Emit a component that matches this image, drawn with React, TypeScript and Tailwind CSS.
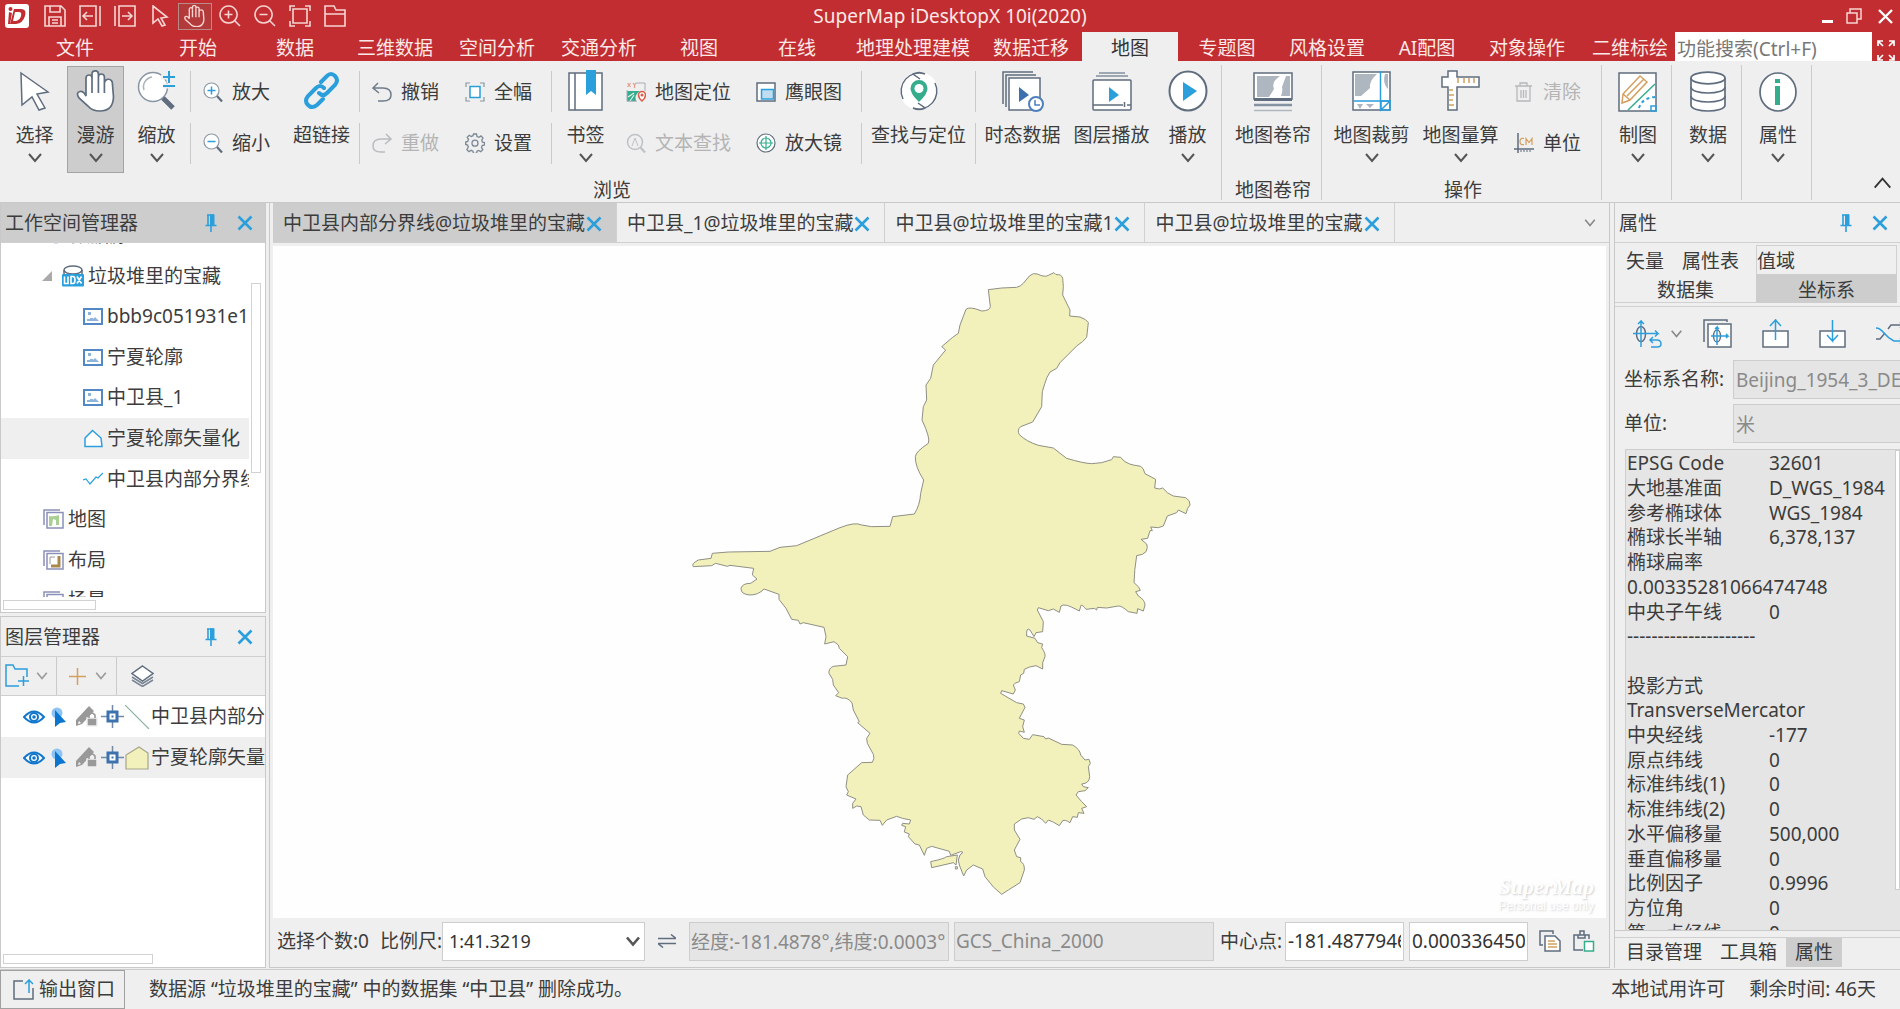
import React from 'react';

type Kids = { children?: React.ReactNode };

const SLATE = '#5f6d7e';
const BLUE = '#2b9fdc';
const GREEN = '#35ad8d';
const BROWN = '#d3a05f';

/* ---------- icons ---------- */

interface SvgProps extends Kids {
  w: number;
  h: number;
  box?: string;
  stroke?: string;
  sw?: number;
  className?: string;
}

function Svg({ w, h, box, stroke = SLATE, sw = 1.5, className = '', children }: SvgProps) {
  return (
    <svg
      width={w}
      height={h}
      viewBox={box ?? `0 0 ${w} ${h}`}
      fill="none"
      stroke={stroke}
      strokeWidth={sw}
      className={`shrink-0 ${className}`}
      aria-hidden="true"
    >
      {children}
    </svg>
  );
}

const HAND =
  'M10 26V8a3 3 0 0 1 6 0V4a3.2 3.2 0 0 1 6.4 0V7a3 3 0 0 1 6 0V13a3.4 3.4 0 0 1 8 0.5L37.500 27Q37 41 24 41Q16 41 12 36L3 28Q-0.500 22.500 4 21.500Q7.500 21 10 26Z';

function Chevron({ w = 14, h = 10, color = '#555', sw = 2 }: { w?: number; h?: number; color?: string; sw?: number }) {
  return (
    <Svg w={w} h={h} box="0 0 14 10" stroke={color} sw={sw}>
      <path d="M1 1l6 7 6-7" />
    </Svg>
  );
}

function CloseIcon() {
  return (
    <Svg w={16} h={16} stroke={BLUE} sw={2.6}>
      <path d="M1.500 1.500l13 13M14.500 1.500l-13 13" />
    </Svg>
  );
}

function PinIcon() {
  return (
    <Svg w={12} h={18} stroke={BLUE} sw={1.6}>
      <path d="M3 1v10M0.500 11.500h11M6 12v6M2 1h7" />
      <rect x="5" y="0.500" width="4.500" height="11" fill={BLUE} stroke="none" />
    </Svg>
  );
}

const icons = {
  select: (
    <Svg w={32} h={40}>
      <path d="M2 2L29 21 18 23 26 37 20 39 13 26 3 34Z" fill="#fff" />
    </Svg>
  ),
  pan: (
    <Svg w={40} h={42} sw={1.7}>
      <path d={HAND} fill="#fff" />
      <path d="M16 8v15M22.400 7v16M28.400 13v10" />
    </Svg>
  ),
  zoom: (
    <Svg w={40} h={42}>
      <circle cx="16" cy="17" r="14.500" fill="#fff" stroke="#8995a3" />
      <path d="M7 20A10 10 0 0 1 15 7" stroke="#a9b2bc" />
      <path d="M26 28l10 10" strokeWidth="5" />
      <path d="M24 7h14M32 1v12M26 16h12" stroke="#efefef" strokeWidth="5" />
      <path d="M26 7h12M32 1v12M26 16h12" stroke={BLUE} strokeWidth="2" />
    </Svg>
  ),
  link: (
    <Svg w={38} h={40} stroke={BLUE} sw={4}>
      <path d="M18 11l6-6q4-4 8 0 4 4 0 9l-8 8q-4 4-8 0" strokeLinecap="round" />
      <path d="M20 28l-6 6q-5 4-9 0-4-4 0-9l8-8q4-4 8 0" strokeLinecap="round" />
    </Svg>
  ),
  bookmark: (
    <Svg w={36} h={42}>
      <rect x="1" y="3" width="33" height="37" fill="#fff" />
      <path d="M7 3v37" />
      <path d="M18 0h10v25l-5-4-5 4z" fill={BLUE} stroke="none" />
    </Svg>
  ),
  findLocate: (
    <Svg w={40} h={42}>
      <circle cx="20" cy="21" r="19" fill="#fff" stroke="none" />
      <path d="M26 4A18 18 0 0 0 4 29M14 38A18 18 0 0 0 36 13M26 4q-6-3-12 0l7 5M14 38q6 3 12 0l-7-5" />
      <path d="M20 10a8.500 8.500 0 0 0-8.500 8.500Q11.500 24 20 32 28.500 24 28.500 18.500A8.500 8.500 0 0 0 20 10z" fill={GREEN} stroke="none" />
      <circle cx="20" cy="18.500" r="4.500" fill="#fff" stroke="none" />
    </Svg>
  ),
  timeData: (
    <Svg w={42} h={42}>
      <path d="M1 34V2h30M4 37V5h30" />
      <rect x="7" y="8" width="31" height="32" fill="#fff" />
      <path d="M17 17l10 8-10 7z" fill="#3c6fae" stroke="none" />
      <circle cx="34" cy="34" r="7" fill="#fff" stroke="#4d7fbd" strokeWidth="2" />
      <path d="M33 30v5h5" stroke="#4d7fbd" />
    </Svg>
  ),
  layerPlay: (
    <Svg w={40} h={42}>
      <path d="M7 3h26M4 6h32" stroke="#8491a0" />
      <rect x="1" y="10" width="38" height="30" rx="1" fill="#fff" />
      <path d="M1 35h30M35 35h4M32.500 32v5" />
      <path d="M17 17l10 8-10 7z" fill={BLUE} stroke="none" />
    </Svg>
  ),
  play: (
    <Svg w={40} h={42} sw={2}>
      <ellipse cx="20" cy="21" rx="18.500" ry="19.500" fill="#fff" />
      <path d="M15 12l14 9-14 10z" fill={BLUE} stroke="none" />
    </Svg>
  ),
  swipe: (
    <Svg w={40} h={42}>
      <rect x="1" y="3" width="38" height="26" fill="#fff" />
      <path d="M4 6h23q-9 6-6 13l-5 8H4zM33 6h4v20h-9q2-5 1-9z" fill="#aeb6c0" stroke="none" />
      <path d="M1 29.500h38" strokeWidth="3" />
      <path d="M1 35h38" strokeWidth="2.500" stroke="#8491a0" />
      <path d="M1 40.500h38" stroke="#aeb6c0" />
    </Svg>
  ),
  clip: (
    <Svg w={40} h={42}>
      <rect x="1" y="2" width="37" height="38" fill="#fff" />
      <path d="M3 4h22q-8 7-7 14l-9 8H3zM33 4h3v15q-6-6-3-15zM5 34h6l-3 5zM14 34h8l-4 4z" fill="#aeb6c0" stroke="none" />
      <path d="M28.500 1v40M1 31h38" stroke={BLUE} />
      <path d="M29 31h9v9h-9zM38 31l-10 10" stroke={BLUE} />
    </Svg>
  ),
  measure: (
    <Svg w={40} h={42}>
      <path d="M7 1h9v6h22v10H16v23H7V17H1V7h6z" fill="#fff" />
      <path d="M17 8v5M23 8v5M28 8v5M33 8v5" stroke={BROWN} />
      <path d="M8 20h4M8 25h5M8 30h4M8 35h5" stroke={BROWN} />
    </Svg>
  ),
  mapping: (
    <Svg w={40} h={42}>
      <rect x="1" y="3" width="37" height="38" fill="#fff" />
      <path d="M4 33l1-9L22 6l7 6L12 30zM5 24l7 6M9 26L26 9" stroke={BROWN} />
      <path d="M37 14L10 40" stroke={GREEN} />
      <path d="M21 38q3-10 16-11" stroke={BLUE} strokeDasharray="3 3" strokeWidth="2" />
      <rect x="33" y="36" width="5" height="5" stroke={BLUE} />
    </Svg>
  ),
  database: (
    <Svg w={38} h={42} sw={1.7}>
      <path d="M2 8v27c0 8 34 8 34 0V8" fill="#fff" />
      <ellipse cx="19" cy="8" rx="17" ry="5.800" fill="#fff" />
      <path d="M2 17c0 8 34 8 34 0M2 26c0 8 34 8 34 0" />
    </Svg>
  ),
  info: (
    <Svg w={40} h={42} sw={1.7}>
      <ellipse cx="20" cy="22" rx="18" ry="19" fill="#fff" />
      <path d="M19.500 9v4M19.500 16v19" stroke={GREEN} strokeWidth="5" />
    </Svg>
  ),
  zoomIn: (
    <Svg w={20} h={20} sw={1.2}>
      <circle cx="8.500" cy="8.500" r="7.500" fill="#fff" stroke="#8e99a6" />
      <path d="M14 14l5 5.500" strokeWidth="2.200" />
      <path d="M8.500 4.500v8M4.500 8.500h8" stroke={BLUE} strokeWidth="1.500" />
    </Svg>
  ),
  zoomOut: (
    <Svg w={20} h={20} sw={1.2}>
      <circle cx="8.500" cy="8.500" r="7.500" fill="#fff" stroke="#8e99a6" />
      <path d="M14 14l5 5.500" strokeWidth="2.200" />
      <path d="M4.500 8.500h8" stroke={BLUE} strokeWidth="1.500" />
    </Svg>
  ),
  undo: (
    <Svg w={20} h={20} stroke="#6f7c8b">
      <path d="M6 1L1 6l6 5M1 6h10q8 0 8 7 0 6-8 6H6" />
    </Svg>
  ),
  redo: (
    <Svg w={20} h={20} stroke="#b9bdc1">
      <path d="M14 1l5 5-6 5M19 6H9Q1 6 1 13q0 6 8 6h4" />
    </Svg>
  ),
  fullExtent: (
    <Svg w={20} h={20}>
      <path d="M1 5V1h4M15 1h4v4M19 15v4h-4M5 19H1v-4" stroke="#8b96a2" strokeWidth="1.200" />
      <rect x="5" y="4.500" width="10" height="11" fill="#fff" stroke={BLUE} />
    </Svg>
  ),
  settings: (
    <Svg w={20} h={20} stroke="#7c8896" sw={1.3}>
      <path d="M8.500 1h3l.5 2.500 2 .8 2-1.400 2 2.200-1.300 2 .8 2 2 .4v2.500l-2.300.6-.7 2 1.300 2-2 2-2.200-1.200-1.600.8-.5 2.300h-3l-.6-2.400-1.800-.8-2.200 1.300-2-2L3.300 14l-.7-2L.700 11.500V9l2-.5.8-2.200-1.300-2 2-2 2 1.200 1.800-.8z" />
      <circle cx="10" cy="10.200" r="3" />
    </Svg>
  ),
  mapLocate: (
    <Svg w={20} h={20}>
      <path d="M1 9h13q-6 4-4 10H1z" fill={GREEN} stroke="none" />
      <path d="M2 15l6-4M4 19l4-6" stroke="#dff2ec" strokeWidth="1.200" />
      <path d="M1 8v11.300h10M10 1h9v8" stroke="#a6aeb8" strokeWidth="1" />
      <path d="M1.500 1l3 4M4.500 1l-3 4M7 1l1.500 2L10 1M8.500 3v3" stroke="#e59a8a" strokeWidth="1.200" />
      <path d="M16 9.500a3.500 3.500 0 0 0-3.500 3.500q0 3 3.500 6 3.500-3 3.500-6A3.500 3.500 0 0 0 16 9.500z" fill="#fff" stroke="#dc5c4a" />
      <circle cx="16" cy="13" r="0.800" stroke="#dc5c4a" />
    </Svg>
  ),
  textFind: (
    <Svg w={20} h={20} stroke="#bfc2c5">
      <circle cx="9" cy="9" r="7.500" />
      <path d="M14.500 14.500l4.500 5" strokeWidth="2.200" />
      <path d="M6 13l3-8 3 8" strokeWidth="1" />
    </Svg>
  ),
  eagleEye: (
    <Svg w={20} h={20}>
      <rect x="1" y="1" width="18" height="18" fill="#fff" />
      <rect x="5.500" y="7.500" width="12" height="9.500" fill="#bfdcf0" stroke={BLUE} />
    </Svg>
  ),
  magnifier: (
    <Svg w={20} h={20} sw={1.2}>
      <circle cx="10" cy="10" r="9" fill="#fff" />
      <circle cx="10" cy="10" r="5" stroke={GREEN} />
      <path d="M10 3v14M3 10h14" stroke={GREEN} />
    </Svg>
  ),
  trash: (
    <Svg w={20} h={20} stroke="#b5b8bb" sw={1.3}>
      <path d="M1 4h17M6 4V1h7v3M3 4v15h13V4M7 8v8M9.500 8v8M12 8v8" />
    </Svg>
  ),
  unit: (
    <Svg w={20} h={20}>
      <path d="M4 0v20M0 16h20" />
      <path d="M7 17v2M10 17v2M13 17v2M16 17v2" strokeWidth="1" />
      <path d="M10 5.500Q6 4.500 6 8.500T10 11.500M12 12V5.500l3 4 3-4V12" stroke={BROWN} strokeWidth="1.200" />
    </Svg>
  ),
};

type IconName = keyof typeof icons;

/* ---------- title bar ---------- */

const quickIcons: { label: string; art: React.ReactNode; active?: boolean }[] = [
  { label: '保存', art: <path d="M1 1h16l4 4v16H1zM6 1v6h10V1M5 21v-9h12v9M8 15h6M8 18h6" /> },
  { label: '上一视图', art: <path d="M17 1H1v20h16zM21 1v20M14 11H4M8 7l-4 4 4 4" /> },
  { label: '下一视图', art: <path d="M5 1h16v20H5zM1 1v20M8 11h10M14 7l4 4-4 4" /> },
  { label: '选择', art: <path d="M4 1l14 11-6 1 4 7-3 1-4-7-5 4z" /> },
  {
    label: '漫游',
    active: true,
    art: (
      <g transform="scale(.53)" strokeWidth="2.600">
        <path d={HAND} />
        <path d="M16 8v15M22.400 7v16M28.400 13v10" />
      </g>
    ),
  },
  { label: '放大', art: <path d="M9.500 1a8.500 8.500 0 1 0 .1 0zM16 16l5 5M9.500 5.500v8M5.500 9.500h8" /> },
  { label: '缩小', art: <path d="M9.500 1a8.500 8.500 0 1 0 .1 0zM16 16l5 5M5.500 9.500h8" /> },
  { label: '全幅', art: <path d="M4 4h14v14H4zM1 6V1h5M16 1h5v5M21 16v5h-5M6 21H1v-5" /> },
  { label: '打开', art: <path d="M1 21V1h9l2 4h9v16zM1 9h20" /> },
];

function TitleBar() {
  return (
    <header className="grid h-8 grid-cols-[1fr_auto_1fr] items-center bg-[#c22d31] text-[#fbe9e7]">
      <div className="flex items-center pl-[5px]">
        <svg width="24" height="24" viewBox="0 0 24 24" className="mr-[9px]" aria-hidden="true">
          <rect width="24" height="24" rx="3" fill="#fff" />
          <path d="M9 5h7q6 0 4 7t-9 8H5zM10 8L8 17h3q4-1 5-5t-2-4z" fill="#c22d31" fillRule="evenodd" />
          <circle cx="5.500" cy="5" r="2" fill="#c22d31" />
          <path d="M4 8l3 1-2 11H3z" fill="#c22d31" />
        </svg>
        <div className="flex gap-px">
          {quickIcons.map((q) => (
            <button
              key={q.label}
              aria-label={q.label}
              className={`flex h-[27px] w-[34px] items-center justify-center border ${q.active ? 'border-[#b98a86] bg-[#b23a3b]' : 'border-transparent'}`}
            >
              <Svg w={22} h={22} stroke="#f6d5d2" sw={1.6}>
                {q.art}
              </Svg>
            </button>
          ))}
        </div>
      </div>
      <h1 className="leading-6">SuperMap iDesktopX 10i(2020)</h1>
      <div className="flex items-center justify-end gap-3 pr-[7px]">
        <button aria-label="最小化">
          <Svg w={12} h={16} stroke="#fff" sw={3}>
            <path d="M0 13.500h11" />
          </Svg>
        </button>
        <button aria-label="还原">
          <Svg w={16} h={16} stroke="#f6d5d2">
            <path d="M1 5h10v10H1zM4 5V1h11v10h-4" />
          </Svg>
        </button>
        <button aria-label="关闭" className="ml-1">
          <Svg w={15} h={15} stroke="#fff" sw={2.4}>
            <path d="M1 1l13 13M14 1L1 14" />
          </Svg>
        </button>
      </div>
    </header>
  );
}

const menuTabs = [
  { name: '文件', width: 'w-[150px]' },
  { name: '开始', width: 'w-[96px]' },
  { name: '数据', width: 'w-[98px]' },
  { name: '三维数据', width: 'w-[102px]' },
  { name: '空间分析', width: 'w-[102px]' },
  { name: '交通分析', width: 'w-[102px]' },
  { name: '视图', width: 'w-[98px]' },
  { name: '在线', width: 'w-[98px]' },
  { name: '地理处理建模', width: 'w-[134px]' },
  { name: '数据迁移', width: 'w-[102px]' },
  { name: '地图', width: 'w-[96px]' },
  { name: '专题图', width: 'w-[98px]' },
  { name: '风格设置', width: 'w-[102px]' },
  { name: 'AI配图', width: 'w-[98px]' },
  { name: '对象操作', width: 'w-[102px]' },
];

function MenuBar() {
  return (
    <nav className="flex h-[29px] bg-[#c22d31] leading-[25px] text-[#fbe9e7]">
      {menuTabs.map((tab) => (
        <button
          key={tab.name}
          className={`${tab.width} shrink-0 whitespace-nowrap pt-1 ${tab.name === '地图' ? 'bg-[#efefef] text-[#333]' : ''}`}
        >
          {tab.name}
        </button>
      ))}
      <button className="min-w-0 flex-1 overflow-hidden whitespace-nowrap pt-1 text-right">二维标绘</button>
      <input
        aria-label="功能搜索"
        placeholder="功能搜索(Ctrl+F)"
        className="ml-[7px] h-[29px] w-[197px] bg-white px-[2px] pt-1 text-[#333] outline-none placeholder:text-[#777]"
      />
      <button aria-label="全屏" className="flex w-7 items-end justify-center">
        <Svg w={18} h={21} stroke="#fff" sw={1.7}>
          <path d="M1 6V1h5M1 1l5 5M12 1h5v5M17 1l-5 5M1 15v5h5M1 20l5-5M17 15v5h-5M17 20l-5-5" />
        </Svg>
      </button>
    </nav>
  );
}

/* ---------- ribbon ---------- */

interface BigProps {
  icon: IconName;
  label: string;
  width?: string;
  menu?: boolean;
  active?: boolean;
}

function BigButton({ icon, label, width = 'w-[57px]', menu, active }: BigProps) {
  return (
    <button
      className={`${width} flex h-[107px] shrink-0 flex-col items-center border pt-[3px] ${active ? 'border-[#a3a3a3] bg-[#cdcdcd]' : 'border-transparent'}`}
    >
      <span className="flex h-[42px] items-center">{icons[icon]}</span>
      <span className="mt-[11px] whitespace-nowrap leading-6">{label}</span>
      {menu && (
        <span className="mt-[6px]">
          <Chevron />
        </span>
      )}
    </button>
  );
}

function SmallButton({ icon, label, disabled }: { icon: IconName; label: string; disabled?: boolean }) {
  return (
    <button disabled={disabled} className="flex h-[51px] items-center gap-[9px] whitespace-nowrap disabled:text-[#b4b4b4]">
      {icons[icon]}
      <span className="leading-6">{label}</span>
    </button>
  );
}

function SmallColumn({ children }: Kids) {
  return <div className="flex shrink-0 flex-col">{children}</div>;
}

function Divider() {
  return (
    <div className="flex w-px shrink-0 flex-col gap-[11px] pt-[5px]">
      <span className="h-[41px] w-px bg-[#cacaca]" />
      <span className="h-[41px] w-px bg-[#cacaca]" />
    </div>
  );
}

function Group({ label, children }: { label?: string } & Kids) {
  return (
    <section className="mb-[2px] mt-1 flex flex-col border-r border-[#cbcbcb] pl-[3px]">
      <div className="flex pt-px">{children}</div>
      {label && <div className="mt-[5px] text-center leading-6">{label}</div>}
    </section>
  );
}

function Ribbon() {
  return (
    <div className="flex h-[142px] border-b border-[#c9c9c9] bg-[#efefef]">
      <Group label="浏览">
        <div className="flex gap-1 pl-[3px] pr-[5px]">
          <BigButton icon="select" label="选择" menu />
          <BigButton icon="pan" label="漫游" menu active />
          <BigButton icon="zoom" label="缩放" menu />
        </div>
        <Divider />
        <div className="flex pl-3">
          <SmallColumn>
            <SmallButton icon="zoomIn" label="放大" />
            <SmallButton icon="zoomOut" label="缩小" />
          </SmallColumn>
        </div>
        <div className="pl-[14px]">
          <BigButton icon="link" label="超链接" width="w-[75px]" />
        </div>
        <Divider />
        <div className="flex gap-[26px] pl-3 pr-[19px]">
          <SmallColumn>
            <SmallButton icon="undo" label="撤销" />
            <SmallButton icon="redo" label="重做" disabled />
          </SmallColumn>
          <SmallColumn>
            <SmallButton icon="fullExtent" label="全幅" />
            <SmallButton icon="settings" label="设置" />
          </SmallColumn>
        </div>
        <Divider />
        <div className="flex pl-[5px]">
          <BigButton icon="bookmark" label="书签" menu />
        </div>
        <div className="flex gap-[25px] pl-3 pr-[19px]">
          <SmallColumn>
            <SmallButton icon="mapLocate" label="地图定位" />
            <SmallButton icon="textFind" label="文本查找" disabled />
          </SmallColumn>
          <SmallColumn>
            <SmallButton icon="eagleEye" label="鹰眼图" />
            <SmallButton icon="magnifier" label="放大镜" />
          </SmallColumn>
        </div>
        <Divider />
        <BigButton icon="findLocate" label="查找与定位" width="w-[113px]" />
        <Divider />
        <div className="flex px-[2px]">
          <BigButton icon="timeData" label="时态数据" width="w-[89px]" />
          <BigButton icon="layerPlay" label="图层播放" width="w-[89px]" />
          <BigButton icon="play" label="播放" width="w-[63px]" menu />
        </div>
      </Group>
      <Group label="地图卷帘">
        <BigButton icon="swipe" label="地图卷帘" width="w-[96px]" />
      </Group>
      <Group label="操作">
        <div className="flex pl-[2px]">
          <BigButton icon="clip" label="地图裁剪" width="w-[89px]" menu />
          <BigButton icon="measure" label="地图量算" width="w-[89px]" menu />
        </div>
        <div className="flex pl-[9px] pr-5">
          <SmallColumn>
            <SmallButton icon="trash" label="清除" disabled />
            <SmallButton icon="unit" label="单位" />
          </SmallColumn>
        </div>
      </Group>
      <Group>
        <BigButton icon="mapping" label="制图" width="w-[66px]" menu />
      </Group>
      <Group>
        <BigButton icon="database" label="数据" width="w-[66px]" menu />
      </Group>
      <Group>
        <BigButton icon="info" label="属性" width="w-[66px]" menu />
      </Group>
      <button aria-label="折叠功能区" className="mb-[13px] ml-auto mr-2 flex rotate-180 items-start self-end">
        <Chevron w={19} h={13} sw={1.400} color="#333" />
      </button>
    </div>
  );
}

/* ---------- left side ---------- */

function PanelHeader({ title, active }: { title: string; active?: boolean }) {
  return (
    <div className={`flex h-10 shrink-0 items-center border-b border-[#d0d0d0] pl-1 pr-3 ${active ? 'bg-[#cdcdcd]' : 'bg-[#efefef]'}`}>
      <h2 className="flex-1 leading-6">{title}</h2>
      <button aria-label="固定" className="mr-5">
        <PinIcon />
      </button>
      <button aria-label="关闭">
        <CloseIcon />
      </button>
    </div>
  );
}

const imageIcon = (
  <Svg w={20} h={17} stroke="#5289c4" sw={2}>
    <rect x="1" y="1" width="18" height="15" fill="#fff" />
    <path d="M4 13v-2h3v-1h3v1l2-2 4 4zM5 4h3v3H5z" fill="#8fb4dc" stroke="none" />
  </Svg>
);

function StackIcon({ children }: Kids) {
  return (
    <Svg w={21} h={20} stroke="#8a90b8" sw={1.5}>
      <path d="M1 16V1h16" />
      <rect x="4" y="3.500" width="16" height="15.500" fill="#fff" />
      {children}
    </Svg>
  );
}

interface TreeRow {
  name: string;
  pad: string;
  icon: React.ReactNode;
  selected?: boolean;
  open?: boolean;
}

const treeRows: TreeRow[] = [
  {
    name: '数据源',
    pad: 'pl-[45px]',
    icon: (
      <Svg w={21} h={18} stroke="#5289c4">
        <ellipse cx="10" cy="4" rx="8" ry="3" />
        <path d="M2 4v10q8 5 16 0V4" />
      </Svg>
    ),
  },
  {
    name: '垃圾堆里的宝藏',
    pad: 'pl-[42px]',
    open: true,
    icon: (
      <Svg w={22} h={22}>
        <ellipse cx="11" cy="5" rx="9" ry="4" fill="#fff" />
        <path d="M2 5v6M20 5v6" />
        <rect x="0" y="9" width="22" height="12.500" rx="1" fill={BLUE} stroke="none" />
        <path d="M2.500 11.500v7h3.500v-7M9 11.500h2q2 0 2 3.500t-2 3.500H9zM15 11.500l4.500 7M19.500 11.500l-4.500 7" stroke="#fff" strokeWidth="1.600" />
      </Svg>
    ),
  },
  { name: 'bbb9c051931e1', pad: 'pl-[82px]', icon: imageIcon },
  { name: '宁夏轮廓', pad: 'pl-[82px]', icon: imageIcon },
  { name: '中卫县_1', pad: 'pl-[82px]', icon: imageIcon },
  {
    name: '宁夏轮廓矢量化',
    pad: 'pl-[82px]',
    selected: true,
    icon: (
      <Svg w={20} h={19} stroke={BLUE}>
        <path d="M2 17.500V9l7.500-7.500L18 9l1 8.500z" fill="#fff" />
      </Svg>
    ),
  },
  {
    name: '中卫县内部分界线',
    pad: 'pl-[82px]',
    icon: (
      <Svg w={20} h={14} stroke={BLUE} sw={1.2}>
        <path d="M0 8l3-1 4 5 6-7 2 1 5-5" />
      </Svg>
    ),
  },
  {
    name: '地图',
    pad: 'pl-[42px]',
    icon: (
      <StackIcon>
        <path d="M6 7q5 1 10-1v10h-3v-5l-3-1-1 7H6z" fill="#a9cf94" stroke="none" />
      </StackIcon>
    ),
  },
  {
    name: '布局',
    pad: 'pl-[42px]',
    icon: (
      <StackIcon>
        <path d="M16 6v10H8" stroke="#a98850" strokeWidth="3" />
        <path d="M7 7h5M7 7v7" stroke="#999" strokeWidth="1" />
      </StackIcon>
    ),
  },
  {
    name: '场景',
    pad: 'pl-[42px]',
    icon: (
      <StackIcon>
        <path d="M6 8h12" stroke="#7fa6cf" />
      </StackIcon>
    ),
  },
];

function WorkspacePanel() {
  return (
    <section className="flex h-[410px] flex-col border border-t-0 border-[#c9c9c9] bg-white">
      <PanelHeader title="工作空间管理器" active />
      <div className="flex h-[354px] shrink-0 overflow-hidden">
        <ul className="-mt-[28px] grid h-[406px] min-w-0 flex-1 auto-rows-fr">
          {treeRows.map((row) => (
            <li
              key={row.name}
              className={`flex min-w-0 items-center overflow-hidden whitespace-nowrap ${row.open ? '' : row.pad} ${row.selected ? 'bg-[#efefef]' : ''}`}
            >
              {row.open && (
                <Svg w={20} h={10} className="ml-[41px]" stroke="none">
                  <path d="M0 10L10 0v10z" fill="#aaa" />
                </Svg>
              )}
              <span className="mr-1 flex">{row.icon}</span>
              <span>{row.name}</span>
            </li>
          ))}
        </ul>
        <div className="w-[16px] shrink-0 pl-[2px] pt-[40px]">
          <div className="h-[190px] w-[10px] border border-[#d2d2d2] bg-white" />
        </div>
      </div>
      <div className="ml-[2px] mt-[3px] h-[10px] w-[93px] shrink-0 border border-[#d2d2d2]" />
    </section>
  );
}

function LayerFlags() {
  return (
    <>
      <Svg w={22} h={14} stroke="#1277cc" sw={2}>
        <path d="M1 7q10-11 20 0-10 11-20 0z" fill="#fff" />
        <circle cx="11" cy="7" r="4" />
        <circle cx="11" cy="7" r="1.800" fill="#1277cc" stroke="none" />
      </Svg>
      <Svg w={17} h={20} className="ml-[6px]" stroke="none">
        <circle cx="6" cy="6" r="5.500" fill="#8cc5f5" />
        <path d="M4 3l11 12-6 1-5 4z" fill="#0c76cf" />
      </Svg>
      <Svg w={22} h={21} className="ml-[8px]" stroke="none">
        <path d="M0 14L13 0l5 5L6 18l-6 2zM3 15l2 2-3 1z" fill="#999" fillRule="evenodd" />
        <rect x="11" y="12" width="10" height="8" fill="#999" stroke="#efefef" />
        <path d="M13 12V9q3-4 6 0v3" stroke="#999" strokeWidth="1.600" fill="none" />
      </Svg>
      <Svg w={23} h={23} className="ml-[3px]" stroke="#3c73ad" sw={1.5}>
        <path d="M0 11.500h23M11.500 0v23" stroke="#7189a5" />
        <rect x="7" y="7" width="9" height="9" fill="#fff" strokeWidth="3" />
        <rect x="10.500" y="10.500" width="2" height="2" fill="#3c73ad" stroke="none" />
      </Svg>
    </>
  );
}

function LayerPanel() {
  return (
    <section className="mt-[3px] flex min-h-0 flex-1 flex-col border border-[#c9c9c9] bg-white">
      <PanelHeader title="图层管理器" />
      <div className="flex h-[39px] shrink-0 border-b border-[#d0d0d0] bg-[#efefef]">
        <button aria-label="新建图层组" className="flex w-[56px] items-center gap-[7px] border-r border-[#cbcbcb] pl-1">
          <Svg w={24} h={24} stroke={BLUE}>
            <path d="M14 22H1V1h7l2 4h12v8M18.500 12v10M13 17h11" />
          </Svg>
          <Chevron w={12} h={8} color="#999" />
        </button>
        <button aria-label="添加图层" className="flex w-[60px] items-center gap-[9px] border-r border-[#cbcbcb] pl-3">
          <Svg w={17} h={17} stroke={BROWN}>
            <path d="M8.500 0v17M0 8.500h17" />
          </Svg>
          <Chevron w={12} h={8} color="#999" />
        </button>
        <button aria-label="图层" className="flex items-center pl-[14px]">
          <Svg w={23} h={22} stroke="#7b8794">
            <path d="M1 15l10.500 6.500L22 15M1 12l10.500 6.500L22 12" />
            <path d="M11.500 1L22 8.500 11.500 16 1 8.500z" fill="#fff" stroke={SLATE} />
          </Svg>
        </button>
      </div>
      <ul>
        <li className="flex h-[41px] items-center overflow-hidden whitespace-nowrap pl-[22px]">
          <LayerFlags />
          <Svg w={25} h={24} className="mx-px" stroke="#8bb5a2" sw={1.2}>
            <path d="M0 0l24 24" />
          </Svg>
          中卫县内部分界线
        </li>
        <li className="flex h-[41px] items-center overflow-hidden whitespace-nowrap bg-[#efefef] pl-[22px]">
          <LayerFlags />
          <Svg w={25} h={24} className="mx-px" stroke="#a5a58c" sw={1.2}>
            <path d="M1 23V9L14 1l9 6v16z" fill="#f3f1bb" />
          </Svg>
          宁夏轮廓矢量化
        </li>
      </ul>
      <div className="mb-[3px] ml-[2px] mt-auto h-[10px] w-[150px] border border-[#d2d2d2]" />
    </section>
  );
}

/* ---------- map ---------- */

const NINGXIA =
  'M925 89L965 84 1010 82Q1022 79 1030 70L1048 48Q1060 37 1072 42 1095 53 1105 46L1122 38 1128 44Q1145 42 1148 55L1150 80 1148 105 1170 150 1169 168 1200 171Q1220 178 1225 188L1220 232Q1210 245 1190 258L1160 288 1140 308 1130 325 1110 336Q1100 350 1093 375L1087 395 1085 440 1058 486 1022 500Q1010 510 1018 524 1040 545 1075 556L1120 564Q1140 580 1160 595 1210 610 1235 611 1265 611 1295 599L1300 590 1322 592Q1335 610 1360 615L1382 619Q1390 622 1395 641L1427 658 1424 684Q1440 690 1448 684 1460 700 1480 708L1517 713Q1532 722 1530 735L1523 745 1518 761 1495 750 1490 758 1462 768 1450 798 1435 803 1412 801 1417 812 1410 812 1403 835 1383 838 1400 852Q1405 862 1398 875 1390 885 1370 887 1363 930 1362 968L1375 980 1381 991 1367 995 1375 1008Q1395 1020 1395 1035L1390 1053 1373 1046 1371 1060 1345 1055Q1325 1037 1315 1038L1280 1044 1252 1042 1250 1050 1243 1045 1218 1048Q1207 1033 1203 1036L1198 1053Q1170 1038 1160 1036 1147 1033 1143 1038L1138 1057 1120 1047 1105 1052 1075 1043 1072 1050 1090 1085 1088 1115 1068 1118 1062 1130 1050 1110Q1038 1100 1040 1128L1065 1135 1073 1148 1088 1152 1085 1163Q1097 1180 1095 1190L1088 1208 1088 1227 1068 1217Q1045 1220 1033 1228L1031 1240 1022 1245 1018 1265Q1000 1270 1000 1275L1006 1290 1000 1302 965 1292 962 1300 1010 1328 1030 1332 1035 1342 1018 1375 1033 1380 1028 1400 1033 1417 1018 1413 1016 1420 1030 1435 1048 1438 1058 1424 1092 1430 1097 1437 1105 1434 1145 1453 1178 1455Q1200 1468 1202 1485L1215 1500 1227 1498 1231 1510 1225 1520 1229 1550Q1228 1570 1205 1572L1210 1580 1225 1583 1215 1592 1195 1595 1188 1605 1205 1625 1220 1640 1205 1645 1212 1660 1195 1658 1192 1672 1178 1670 1170 1688Q1155 1678 1148 1682L1138 1697Q1120 1685 1105 1680L1097 1690Q1085 1674 1072 1670L1062 1678 1045 1673 1025 1677 1003 1692 1003 1710 1020 1738 1003 1770 1010 1790 1022 1793 1022 1805Q1034 1810 1033 1830L1020 1868 985 1890 965 1903Q940 1885 915 1850L908 1827 880 1815 860 1830 851 1848 838 1815 835 1800 840 1785 849 1777 842 1775 812 1786 808 1774 755 1759 740 1765 733 1786 718 1755 705 1752 685 1730 688 1722 673 1716 677 1700 665 1696 668 1690 688 1692 692 1680Q665 1676 650 1669L620 1680 607 1696 600 1681 568 1680 550 1665 543 1640 530 1638 518 1645 518 1630 528 1617 500 1605 505 1595 498 1580 503 1545 545 1508 577 1507Q585 1495 580 1483L562 1450 560 1435 570 1420 533 1388 538 1385 520 1350 516 1328Q500 1310 487 1315L467 1307 476 1298 460 1275 458 1258 447 1240Q445 1225 460 1219L498 1215 503 1190 478 1165 475 1155 462 1145 434 1152 438 1130 432 1102 370 1088 360 1092 355 1081 335 1078 318 1045 297 1018 297 1003 252 987Q235 1005 210 1005 182 1003 183 985 187 970 212 970L231 957 217 945 221 925 150 916 142 919 107 910 95 917 40 920Q32 912 55 900L93 895 97 880 145 876 270 874 300 862 350 857 480 803Q525 785 545 795L575 800 630 799 638 770 703 762Q720 735 722 700L731 660Q705 620 706 590 707 575 745 550 752 535 726 480L730 440 740 420 738 375 752 355 760 315 797 270 785 260 818 232 835 220 840 195 858 148Q868 138 905 153 930 152 931 140Z';

const mapTabs = [
  { name: '中卫县内部分界线@垃圾堆里的宝藏', active: true },
  { name: '中卫县_1@垃圾堆里的宝藏' },
  { name: '中卫县@垃圾堆里的宝藏1' },
  { name: '中卫县@垃圾堆里的宝藏' },
];

function MapStatus() {
  const readOnly = 'h-[39px] w-[260px] border border-[#cdcdcd] bg-[#e5e5e5] px-px text-[#8a8a8a]';
  const editable = 'h-[39px] w-[119px] border border-[#cdcdcd] bg-white px-[2px] text-[#333]';
  return (
    <div className="flex h-[49px] shrink-0 items-center bg-[#efefef] pb-[3px] pl-1 pr-[10px]">
      <span className="w-[103px] shrink-0 whitespace-nowrap">选择个数:0</span>
      <label htmlFor="scale" className="w-[62px] shrink-0 whitespace-nowrap">
        比例尺:
      </label>
      <div className="relative">
        <select id="scale" className="h-[39px] w-[203px] appearance-none border border-[#cdcdcd] bg-white pl-[6px] text-[18px] text-[#333]">
          <option>1:41.3219</option>
        </select>
        <span className="pointer-events-none absolute right-[5px] top-[14px]">
          <Chevron h={11} sw={2.600} />
        </span>
      </div>
      <button aria-label="切换" className="mx-[13px]">
        <Svg w={18} h={14}>
          <path d="M0 4.500h18l-5-4M18 9.500H0l5 4" />
        </Svg>
      </button>
      <input aria-label="经纬度" disabled defaultValue="经度:-181.4878°,纬度:0.0003°" className={readOnly} />
      <input aria-label="坐标系" disabled defaultValue="GCS_China_2000" className={`ml-[5px] ${readOnly}`} />
      <label htmlFor="cx" className="ml-[6px] w-[65px] shrink-0 whitespace-nowrap">
        中心点:
      </label>
      <input id="cx" defaultValue="-181.4877946" className={editable} />
      <input aria-label="中心点纬度" defaultValue="0.000336450" className={`ml-[5px] ${editable}`} />
      <button aria-label="复制" className="ml-[11px]">
        <Svg w={22} h={22}>
          <path d="M4 15H1V1h13v3" />
          <path d="M6 6h10l5 5v10H6z" fill="#fff" />
          <path d="M9 11h7M9 14h9M9 17h9" stroke={BROWN} />
        </Svg>
      </button>
      <button aria-label="粘贴" className="ml-[12px]">
        <Svg w={22} h={22}>
          <path d="M10 20H1V5h15v4M5 5v3h7V5M7 5V1h4v4" />
          <rect x="11.500" y="11.500" width="9" height="9.500" fill="#fff" stroke={GREEN} />
        </Svg>
      </button>
    </div>
  );
}

function MapWindow() {
  return (
    <main className="flex min-w-0 flex-1 flex-col border border-t-0 border-[#c9c9c9] bg-[#efefef] pl-[3px]">
      <div className="flex h-10 shrink-0 items-center border-b border-[#d0d0d0]">
        {mapTabs.map((tab) => (
          <div
            key={tab.name}
            className={`flex h-full shrink-0 items-center border-r border-[#d0d0d0] pl-[10px] pr-[14px] pt-[2px] ${tab.active ? 'bg-[#cdcdcd]' : ''}`}
          >
            <button className="mr-px whitespace-nowrap">{tab.name}</button>
            <button aria-label={`关闭 ${tab.name}`}>
              <CloseIcon />
            </button>
          </div>
        ))}
        <button aria-label="更多窗口" className="ml-auto mr-[13px]">
          <Chevron w={12} h={8} color="#888" />
        </button>
      </div>
      <div className="relative mr-[3px] mt-[3px] flex min-h-0 flex-1 items-center justify-center bg-[#fefefe]">
        <svg width="520" height="645" viewBox="0 0 1560 1935" fill="#f3f1bb" stroke="#8f8f84" strokeWidth="3" strokeLinejoin="round" aria-label="宁夏轮廓">
          <path d={NINGXIA} />
          <path d="M752 1805L760 1803Q790 1797 800 1790L832 1785 828 1815 820 1808Q790 1815 755 1823ZM826 1820h6v7h-6z" />
        </svg>
        <div className="absolute bottom-1 right-3 text-center text-white [text-shadow:1px_1px_2px_#cfcfcf]">
          <div className="font-['Liberation_Serif',serif] text-[22px] font-bold italic leading-[22px]">SuperMap</div>
          <div className="font-['Liberation_Sans',sans-serif] text-[12px] leading-4">Personal use only</div>
        </div>
      </div>
      <MapStatus />
    </main>
  );
}

/* ---------- right side ---------- */

const info: [string, string?][] = [
  ['EPSG Code', '32601'],
  ['大地基准面', 'D_WGS_1984'],
  ['参考椭球体', 'WGS_1984'],
  ['椭球长半轴', '6,378,137'],
  ['椭球扁率'],
  ['0.00335281066474748'],
  ['中央子午线', '0'],
  ['---------------------'],
  [''],
  ['投影方式'],
  ['TransverseMercator'],
  ['中央经线', '-177'],
  ['原点纬线', '0'],
  ['标准纬线(1)', '0'],
  ['标准纬线(2)', '0'],
  ['水平偏移量', '500,000'],
  ['垂直偏移量', '0'],
  ['比例因子', '0.9996'],
  ['方位角', '0'],
  ['第一点经线', '0'],
];

function PropertyPanel() {
  return (
    <aside className="ml-[4px] flex w-[286px] shrink-0 flex-col overflow-hidden border-l border-[#c9c9c9] bg-[#efefef]">
      <PanelHeader title="属性" />
      <div className="mt-[2px] grid h-[58px] shrink-0 grid-cols-2 grid-rows-2 whitespace-nowrap pr-[3px] leading-[26px]">
        <div className="flex gap-[18px] pl-[11px] pt-[3px]">
          <button>矢量</button>
          <button>属性表</button>
        </div>
        <button className="border border-b-0 border-[#d0d0d0] pt-[2px] text-left">值域</button>
        <button className="border-b border-[#d0d0d0] pt-[3px]">数据集</button>
        <button className="bg-[#cdcdcd] pt-[3px]">坐标系</button>
      </div>
      <div className="mt-[3px] flex h-[54px] shrink-0 items-center border-t border-[#d0d0d0] pl-[18px]">
        <button aria-label="重新设定坐标系" className="flex items-center gap-[8px]">
          <Svg w={29} h={28} stroke={BLUE}>
            <ellipse cx="8" cy="14" rx="4.500" ry="7.500" stroke={SLATE} />
            <path d="M0 13.500h25l-3-3M25 13.500l-3 3M8 27V1L5 4M8 1l3 3M20 17l-3 3 3 3M17 20h7q4 0 4 4 0 3-4 3h-6" />
          </Svg>
          <Chevron w={13} h={8} color="#888" />
        </button>
        <button aria-label="复制坐标系" className="ml-[20px]">
          <Svg w={29} h={29}>
            <path d="M1 23V1h23v2" />
            <rect x="5" y="5" width="23" height="23" fill="#fff" />
            <ellipse cx="14" cy="17" rx="3.500" ry="6" />
            <path d="M8 17h17l-2-2M25 17l-2 2M14 26V8l-2 2M14 8l2 2" stroke={BLUE} />
          </Svg>
        </button>
        <button aria-label="导出" className="ml-[30px]">
          <Svg w={27} h={29}>
            <rect x="1" y="12" width="25" height="16" fill="#fff" />
            <path d="M13.500 21V1L8 7M13.500 1L19 7" stroke={BLUE} />
          </Svg>
        </button>
        <button aria-label="导入" className="ml-[30px]">
          <Svg w={27} h={29}>
            <rect x="1" y="12" width="25" height="16" fill="#fff" />
            <path d="M13.500 1v21L8 16M13.500 22l5.500-6" stroke={BLUE} />
          </Svg>
        </button>
        <button aria-label="转换" className="ml-[30px]">
          <Svg w={28} h={24}>
            <path d="M0 17h4l5-6M12 7l3-4h12M24 0l3 3-3 3" />
            <path d="M0 6q4 0 8 5t10 8h9M24 16l3 3-3 3" stroke={BLUE} />
          </Svg>
        </button>
      </div>
      <div className="flex h-[39px] shrink-0 items-center pl-[9px]">
        <label htmlFor="crs" className="w-[109px] shrink-0 whitespace-nowrap">
          坐标系名称:
        </label>
        <input id="crs" disabled defaultValue="Beijing_1954_3_DEGREE" className="h-[39px] w-[200px] shrink-0 border border-[#cdcdcd] bg-[#e5e5e5] px-[2px] text-[#8a8a8a]" />
      </div>
      <div className="mt-[5px] flex h-[39px] shrink-0 items-center pl-[9px]">
        <label htmlFor="unit" className="w-[109px] shrink-0 whitespace-nowrap">
          单位:
        </label>
        <input id="unit" disabled defaultValue="米" className="h-[39px] w-[200px] shrink-0 border border-[#cdcdcd] bg-[#e5e5e5] px-[2px] text-[#8a8a8a]" />
      </div>
      <div className="ml-[10px] mt-[6px] flex min-h-0 flex-1 overflow-hidden border-l border-t border-[#cdcdcd] bg-[#e5e5e5]">
        <dl className="mt-px grid h-[494px] flex-1 shrink-0 auto-rows-fr pl-px">
          {info.map(([name, value], i) => (
            <div key={i} className="flex items-center whitespace-nowrap leading-6">
              <dt className="w-[142px] shrink-0">{name}</dt>
              {value && <dd>{value}</dd>}
            </div>
          ))}
        </dl>
        <div className="h-[440px] w-[5px] shrink-0 border border-[#cdcdcd] bg-white" />
      </div>
      <div className="flex h-[38px] shrink-0 items-start border-t border-[#cbcbcb] pt-[6px]">
        <div className="flex w-full border-t border-[#d0d0d0] leading-[29px]">
          <button className="ml-[2px] px-[9px]">目录管理</button>
          <button className="px-[9px]">工具箱</button>
          <button className="bg-[#cdcdcd] px-[9px]">属性</button>
        </div>
      </div>
    </aside>
  );
}

export default function App() {
  return (
    <div className="flex h-screen flex-col overflow-hidden bg-[#efefef] font-['Noto_Sans','Noto_Sans_CJK_SC',sans-serif] text-[19px] text-[#3c3c3c]">
      <TitleBar />
      <MenuBar />
      <Ribbon />
      <div className="flex min-h-0 flex-1">
        <div className="mr-[3px] flex w-[266px] shrink-0 flex-col">
          <WorkspacePanel />
          <LayerPanel />
        </div>
        <MapWindow />
        <PropertyPanel />
      </div>
      <footer className="mt-px flex h-10 shrink-0 items-center border-t border-[#cbcbcb] pr-6">
        <button className="flex h-[39px] w-[125px] items-center gap-1 border border-[#a0a0a0] pl-3">
          <Svg w={22} h={21}>
            <path d="M10 2H1v18h19V9" />
            <path d="M16 14V1l-4 4M16 1l4 4" stroke={BLUE} />
          </Svg>
          <span className="whitespace-nowrap">输出窗口</span>
        </button>
        <span className="ml-6">数据源 “垃圾堆里的宝藏” 中的数据集 “中卫县” 删除成功。</span>
        <span className="ml-auto">本地试用许可</span>
        <span className="ml-6">剩余时间: 46天</span>
      </footer>
    </div>
  );
}
